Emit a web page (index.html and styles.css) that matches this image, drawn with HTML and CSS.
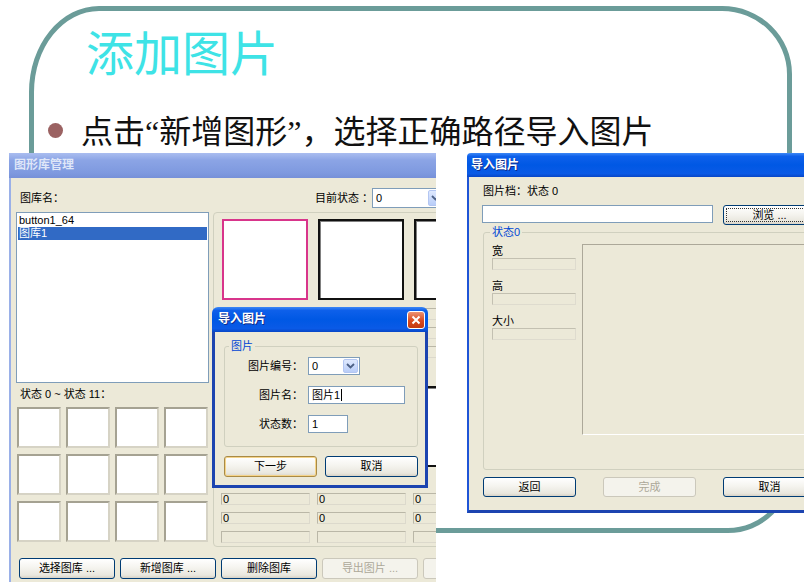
FILE: index.html
```html
<!DOCTYPE html>
<html lang="zh-CN">
<head>
<meta charset="utf-8">
<title>添加图片</title>
<link rel="stylesheet" href="styles.css">
</head>
<body>
<div class="slide">
  <div class="frame">
    <h1 class="title">添加图片</h1>
    <p class="bullet"><span class="dot"></span><span>点击<span class="q">“</span>新增图形<span class="q">”</span>，选择正确路径导入图片</span></p>
  </div>

  <div class="win win-lib">
    <div class="tb tb-off">图形库管理</div>
    <div class="lib-body">
      <div class="lib-top">
        <span class="lib-name">图库名：</span>
        <span>目前状态 ：</span>
        <div class="combo combo-state"><span>0</span><span class="dd"><svg width="9" height="6" viewBox="0 0 9 6"><path d="M1 1l3.5 3.5L8 1" fill="none" stroke="#4d6185" stroke-width="1.8"/></svg></span></div>
      </div>
      <div class="lib-main">
        <div class="lib-left">
          <div class="list">
            <div class="item">button1_64</div>
            <div class="item sel">图库1</div>
          </div>
          <div class="states-lbl">状态 0 ~ 状态 11：</div>
          <div class="thumbs">
            <div class="thumb"></div><div class="thumb"></div><div class="thumb"></div><div class="thumb"></div>
            <div class="thumb"></div><div class="thumb"></div><div class="thumb"></div><div class="thumb"></div>
            <div class="thumb"></div><div class="thumb"></div><div class="thumb"></div><div class="thumb"></div>
          </div>
        </div>
        <div class="lib-panel">
          <div class="imgs"><div class="img pink"></div><div class="img"></div><div class="img"></div></div>
          <div class="fields">
            <div class="fld"></div><div class="fld"></div><div class="fld"></div>
            <div class="fld"></div><div class="fld"></div><div class="fld"></div>
            <div class="fld"></div><div class="fld"></div><div class="fld"></div>
          </div>
          <div class="imgs imgs2"><div class="img"></div><div class="img"></div><div class="img"></div></div>
          <div class="fields fields2">
            <div class="fld">0</div><div class="fld">0</div><div class="fld">0</div>
            <div class="fld">0</div><div class="fld">0</div><div class="fld">0</div>
            <div class="fld"></div><div class="fld"></div><div class="fld"></div>
          </div>
        </div>
      </div>
      <div class="lib-btns">
        <div class="btn">选择图库 ...</div>
        <div class="btn">新增图库 ...</div>
        <div class="btn">删除图库</div>
        <div class="btn dis">导出图片 ...</div>
        <div class="btn dis"></div>
      </div>
    </div>
  </div>

  <div class="win win-imp">
    <div class="tb tb-on">
      <span>导入图片</span>
      <span class="close"><svg width="10" height="10" viewBox="0 0 10 10"><path d="M1.5 1.5l7 7M8.5 1.5l-7 7" stroke="#fff" stroke-width="2"/></svg></span>
    </div>
    <div class="imp-body">
      <fieldset class="grp imp-grp">
        <legend>图片</legend>
        <div class="form">
          <span class="lb">图片编号：</span>
          <div class="combo combo-num"><span>0</span><span class="dd"><svg width="9" height="6" viewBox="0 0 9 6"><path d="M1 1l3.5 3.5L8 1" fill="none" stroke="#4d6185" stroke-width="1.8"/></svg></span></div>
          <span class="lb">图片名：</span>
          <div class="inp inp-name">图片1<span class="caret"></span></div>
          <span class="lb">状态数：</span>
          <div class="inp inp-count">1</div>
        </div>
      </fieldset>
      <div class="imp-btns">
        <div class="btn def">下一步</div>
        <div class="btn">取消</div>
      </div>
    </div>
  </div>

  <div class="win win-imp2">
    <div class="tb tb-on">导入图片</div>
    <div class="r-body">
      <div class="r-file">图片档：状态 0</div>
      <div class="r-row">
        <div class="inp inp-path"></div>
        <div class="btn focus">浏览 ...</div>
      </div>
      <fieldset class="grp r-grp">
        <legend>状态0</legend>
        <div class="r-cols">
          <div class="r-left">
            <span class="lb">宽</span>
            <div class="dfld"></div>
            <span class="lb">高</span>
            <div class="dfld"></div>
            <span class="lb">大小</span>
            <div class="dfld"></div>
          </div>
          <div class="preview"></div>
        </div>
      </fieldset>
      <div class="r-btns">
        <div class="btn">返回</div>
        <div class="btn dis">完成</div>
        <div class="btn">取消</div>
      </div>
    </div>
  </div>
</div>
</body>
</html>
```

FILE: styles.css
```css
body {
  margin: 0;
  background: #fff;
}

.slide {
  position: relative;
  width: 804px;
  height: 582px;
  overflow: hidden;
  background: #fff;
  padding-top: 6px;
  box-sizing: border-box;
}

.frame {
  box-sizing: border-box;
  margin-left: 29px;
  width: 763px;
  height: 527px;
  border: 5px solid #6b9c99;
  border-radius: 70px 70px 64px 64px / 86px 68px 64px 64px;
  padding: 11px 0 0 0;
}

.title {
  margin: 0;
  padding-left: 52px;
  font: 400 48px/56px "Noto Sans CJK SC", sans-serif;
  color: #3ee3e6;
}

.bullet {
  margin: 33px 0 0 14px;
  display: flex;
  align-items: center;
  font: 400 32px/36px "Noto Sans CJK SC", sans-serif;
  color: #111;
  white-space: nowrap;
}

.dot {
  flex: none;
  width: 15px;
  height: 15px;
  border-radius: 50%;
  background: #9b6262;
  margin-right: 18px;
}

.q {
  font-family: "Liberation Serif", serif;
}

/* ---------- windows ---------- */
.win {
  position: absolute;
  box-sizing: border-box;
  display: flex;
  flex-direction: column;
  font: 11px/13px "Liberation Sans", "Noto Sans CJK SC", sans-serif;
  color: #000;
}

.tb {
  flex: none;
  display: flex;
  align-items: center;
  font-weight: bold;
  font-size: 12px;
  white-space: nowrap;
}

.tb-off {
  height: 25px;
  padding-left: 5px;
  background: linear-gradient(#aabdf0, #8ba4e5 30%, #7e99df 80%, #7690d8);
  color: #dfe6f8;
}

.tb-on {
  background: linear-gradient(#3d88f6 0%, #0e60ea 14%, #0058e4 50%, #0a5ae6 86%, #0846c6 100%);
  color: #fff;
  text-shadow: 1px 1px #0f2a8a;
}

.btn {
  box-sizing: border-box;
  flex: none;
  width: 96px;
  height: 21px;
  display: flex;
  align-items: center;
  justify-content: center;
  border: 1px solid #003c74;
  border-radius: 3px;
  background: linear-gradient(#ffffff, #f5f4ef 45%, #e9e7de 85%, #d8d2c6);
  white-space: nowrap;
}

.btn.dis {
  border-color: #cbc8bb;
  color: #aca899;
  background: #f4f3ec;
}

.btn.def {
  border-color: #a98a45;
  box-shadow: inset 0 0 0 1px #f5d48a;
}

.btn.focus {
  outline: 1px dotted #333;
  outline-offset: -4px;
}

.combo {
  box-sizing: border-box;
  height: 20px;
  border: 1px solid #7f9db9;
  background: #fff;
  display: flex;
  align-items: center;
  justify-content: space-between;
  padding-left: 3px;
}

.dd {
  box-sizing: border-box;
  width: 15px;
  align-self: stretch;
  margin: 1px;
  background: linear-gradient(#dfe9fe, #b9cdf8);
  border: 1px solid #b3c6f2;
  border-radius: 2px;
  display: flex;
  align-items: center;
  justify-content: center;
}

.inp {
  box-sizing: border-box;
  height: 18px;
  border: 1px solid #7f9db9;
  background: #fff;
  padding-left: 3px;
  display: flex;
  align-items: center;
}

.caret {
  display: inline-block;
  width: 1px;
  height: 12px;
  background: #000;
  margin-left: 1px;
}

fieldset.grp {
  margin: 0;
  min-width: 0;
  box-sizing: border-box;
  border: 1px solid #d0d0bf;
  border-radius: 3px;
}

fieldset.grp legend {
  padding: 0 2px;
  color: #0046d5;
}

/* ---------- library manager ---------- */
.win-lib {
  left: 9px;
  top: 153px;
  width: 427px;
  height: 440px;
  overflow: hidden;
}

.lib-body {
  flex: 1;
  width: 470px;
  background: #ece9d8;
  border-left: 2px solid #9ab0e8;
  padding-left: 5px;
}

.lib-top {
  display: grid;
  grid-template-columns: 299px 57px 73px;
  align-items: center;
  height: 20px;
  margin-top: 10px;
  white-space: nowrap;
}

.lib-name {
  padding-left: 4px;
}

.lib-main {
  display: grid;
  grid-template-columns: 193px 240px;
  column-gap: 4px;
  margin-top: 4px;
}

.list {
  box-sizing: border-box;
  height: 171px;
  border: 1px solid #7f9db9;
  background: #fff;
  padding: 1px;
}

.item {
  height: 13px;
  line-height: 13px;
  padding-left: 1px;
}

.item.sel {
  background: #316ac5;
  color: #fff;
}

.states-lbl {
  margin-top: 4px;
  line-height: 14px;
  padding-left: 4px;
  white-space: nowrap;
}

.thumbs {
  margin: 6px 0 0 1px;
  display: grid;
  grid-template-columns: repeat(4, 44px);
  grid-auto-rows: 41px;
  column-gap: 5px;
  row-gap: 6px;
}

.thumb {
  box-sizing: border-box;
  background: #fff;
  border: 2px solid;
  border-color: #a5a292 #d6d3c5 #d6d3c5 #a5a292;
}

.lib-panel {
  box-sizing: border-box;
  height: 335px;
  border: 1px solid #d0d0bf;
  border-radius: 4px;
  padding: 6px 0 0 7px;
}

.imgs {
  display: flex;
  gap: 10px;
  margin-left: 1px;
}

.imgs2 {
  margin-top: 28px;
}

.img {
  box-sizing: border-box;
  flex: none;
  width: 86px;
  height: 81px;
  background: #fff;
  border: 2px solid #111;
  box-shadow: inset 1px 1px 0 #808080;
}

.img.pink {
  border-color: #d8358b;
  box-shadow: none;
}

.fields {
  display: grid;
  grid-template-columns: repeat(3, 89px);
  grid-auto-rows: 12px;
  column-gap: 7px;
  row-gap: 7px;
  margin-top: 8px;
}

.fields2 {
  margin-top: 26px;
}

.fld {
  box-sizing: border-box;
  border: 1px solid;
  border-color: #bab7a7 #dcd9cc #dcd9cc #bab7a7;
  background: #ece9d8;
  line-height: 10px;
  padding-left: 1px;
}

.lib-btns {
  display: flex;
  gap: 5px;
  margin: 11px 0 0 3px;
}

/* ---------- import dialog (small) ---------- */
.win-imp {
  left: 212px;
  top: 307px;
  width: 216px;
  height: 181px;
}

.win-imp .tb {
  height: 25px;
  border-radius: 6px 6px 0 0;
  padding: 0 3px 0 6px;
  justify-content: space-between;
}

.close {
  box-sizing: border-box;
  width: 18px;
  height: 18px;
  border: 1px solid #fff;
  border-radius: 3px;
  background: linear-gradient(#ec9374, #d9491e 55%, #c23a10);
  display: flex;
  align-items: center;
  justify-content: center;
}

.imp-body {
  flex: 1;
  background: #ece9d8;
  border: 3px solid #1c44b0;
  border-top: 0;
  padding: 8px 0 0 9px;
}

.imp-grp {
  width: 194px;
  padding: 4px 0 13px 0;
}

.imp-grp legend {
  margin-left: 4px;
  line-height: 13px;
}

.form {
  display: grid;
  grid-template-columns: 78px auto;
  column-gap: 5px;
  row-gap: 11px;
  align-items: center;
  justify-items: start;
}

.form .lb {
  justify-self: end;
  white-space: nowrap;
}

.combo-num {
  width: 52px;
  height: 18px;
}

.inp-name {
  width: 97px;
}

.inp-count {
  width: 40px;
}

.imp-btns {
  display: flex;
  gap: 8px;
  margin-top: 9px;
}

.imp-btns .btn {
  width: 93px;
}

/* ---------- import dialog (large) ---------- */
.win-imp2 {
  left: 467px;
  top: 153px;
  width: 360px;
  height: 360px;
}

.win-imp2 .tb {
  height: 24px;
  padding-left: 4px;
  border-radius: 4px 0 0 0;
}

.r-body {
  flex: 1;
  background: #ece9d8;
  border-left: 2px solid #1f55d6;
  border-bottom: 3px solid #1c44b0;
  padding: 7px 0 0 14px;
}

.r-file {
  line-height: 14px;
}

.r-row {
  display: flex;
  align-items: flex-start;
  gap: 10px;
  margin: 7px 0 0 -1px;
}

.inp-path {
  width: 231px;
}

.r-row .btn {
  width: 93px;
  height: 20px;
}

.r-grp {
  width: 340px;
  margin: 6px 0 0 -1px;
  padding: 5px 0 34px 8px;
}

.r-grp legend {
  margin-left: -2px;
  line-height: 14px;
}

.r-cols {
  display: flex;
  gap: 6px;
}

.r-left {
  flex: none;
  width: 84px;
  display: flex;
  flex-direction: column;
}

.r-left .lb {
  line-height: 14px;
}

.dfld {
  box-sizing: border-box;
  height: 12px;
  margin-bottom: 9px;
  border: 1px solid;
  border-color: #c3c0b1 #dedbce #dedbce #c3c0b1;
  background: #ece9d8;
}

.preview {
  flex: 1;
  box-sizing: border-box;
  height: 191px;
  border: 1px solid;
  border-color: #aca899 #fff #fff #aca899;
}

.r-btns {
  display: flex;
  gap: 27px;
  margin-top: 7px;
}

.r-btns .btn {
  width: 93px;
  height: 20px;
}
```
